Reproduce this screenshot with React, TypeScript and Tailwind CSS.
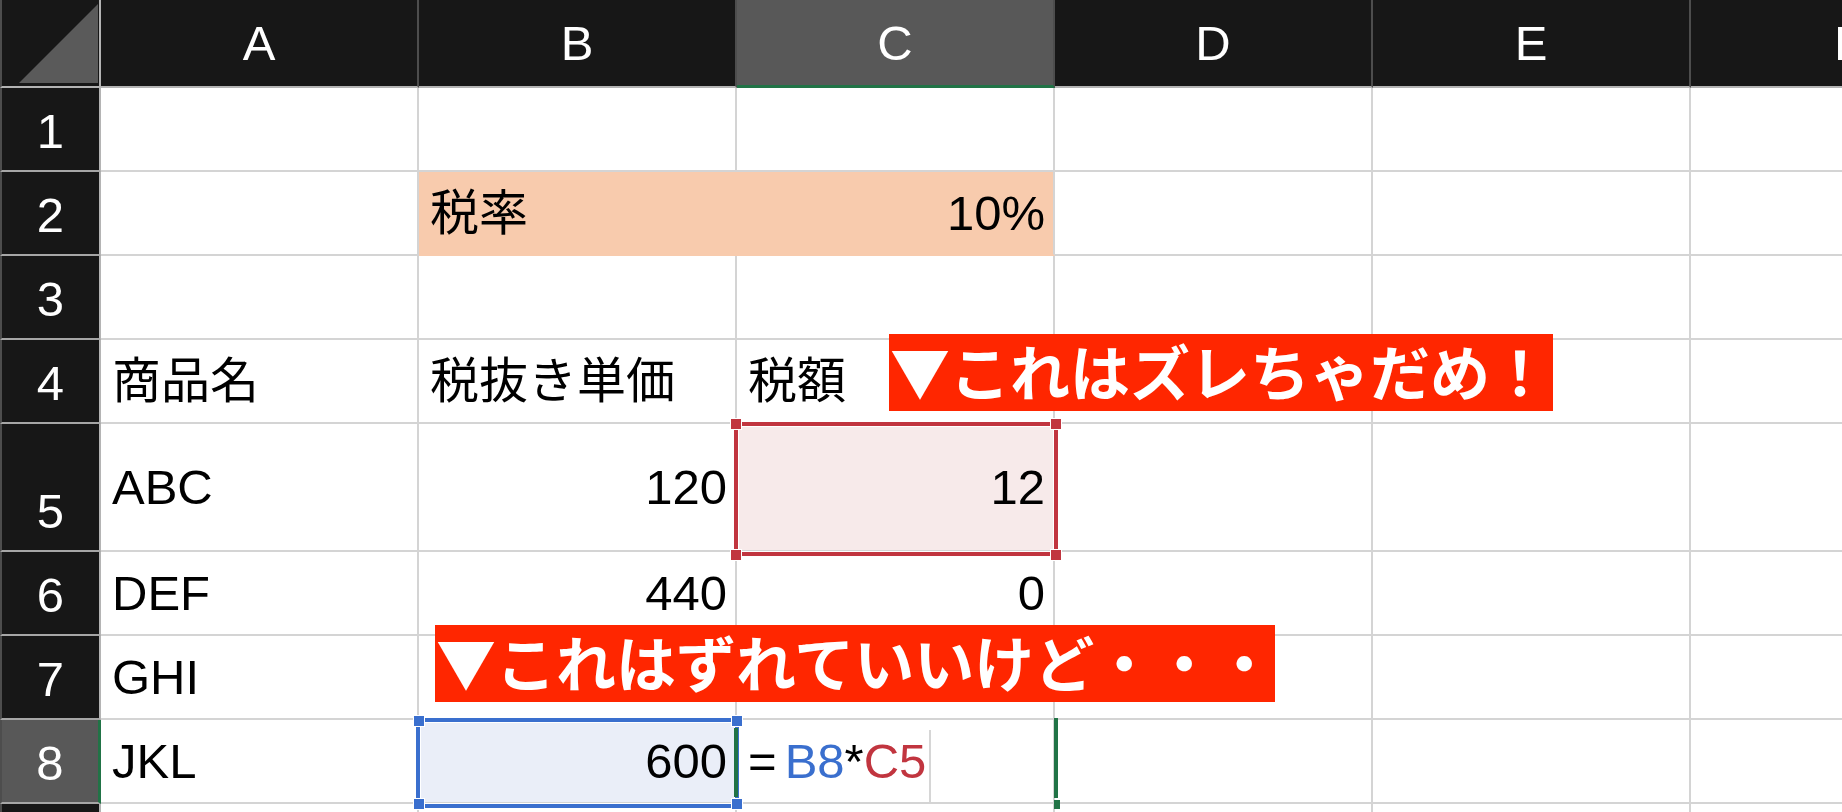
import React from 'react';

type Cell = {
  text?: React.ReactNode;
  align?: 'left' | 'right';
  fill?: string;
};

const COLS = ['A', 'B', 'C', 'D', 'E', 'F'];

// rows 1..8, columns A..F (row 9 is only a sliver at the bottom edge)
const ROWS: Cell[][] = [
  [{}, {}, {}, {}, {}, {}],
  [{}, { text: '税率', fill: 'orange-l' }, { text: '10%', align: 'right', fill: 'orange' }, {}, {}, {}],
  [{}, {}, {}, {}, {}, {}],
  [{ text: '商品名' }, { text: '税抜き単価' }, { text: '税額' }, {}, {}, {}],
  [{ text: 'ABC' }, { text: '120', align: 'right' }, { text: '12', align: 'right', fill: 'pink' }, {}, {}, {}],
  [{ text: 'DEF' }, { text: '440', align: 'right' }, { text: '0', align: 'right' }, {}, {}, {}],
  [{ text: 'GHI' }, {}, {}, {}, {}, {}],
  [
    { text: 'JKL' },
    { text: '600', align: 'right', fill: 'blue' },
    {
      text: (
        <>
          <span className="mr-[8px]">=</span>
          <span className="text-[#3a6fce]">B8</span>
          <span>*</span>
          <span className="text-[#c1353f]">C5</span>
        </>
      ),
    },
    {},
    {},
    {},
  ],
];

const fillClass = (fill?: string) => {
  if (fill === 'orange-l') return 'bg-[#f8cbad] border-r-[#f8cbad] border-b-[#f8cbad]';
  if (fill === 'orange') return 'bg-[#f8cbad] border-b-[#f8cbad]';
  if (fill === 'pink') return 'bg-[#f7eaea]';
  if (fill === 'blue') return 'bg-[#eaeef8]';
  return 'bg-white';
};

const Handle = ({ className, color }: { className: string; color: string }) => (
  <div className={`absolute w-[12px] h-[12px] border border-white ${color} ${className}`} />
);

export default function App() {
  return (
    <div className="relative w-[1842px] h-[812px] overflow-hidden bg-white font-['Liberation_Sans','Noto_Sans_CJK_JP',sans-serif] text-[49px] leading-none text-black">
      <div className="grid grid-cols-[101px_318px_318px_318px_318px_318px_318px] grid-rows-[88px_84px_84px_84px_84px_128px_84px_84px_84px_8px]">
        {/* corner */}
        <div className="relative bg-[#171717] border-l-2 border-l-[#4d4d4d] border-r-2 border-r-[#b4b4b4] border-b-2 border-b-[#b4b4b4]">
          <svg className="absolute left-0 top-0" width="99" height="86" viewBox="0 0 99 86">
            <polygon points="17,83 96,83 96,4" fill="#5a5a5a" />
          </svg>
        </div>
        {COLS.map((c) => (
          <div
            key={c}
            className={`flex justify-center items-start pt-[19px] text-white border-r-2 border-r-[#4d4d4d] border-b-2 ${
              c === 'C' ? 'bg-[#585858] border-b-[3px] border-b-[#217346]' : 'bg-[#171717] border-b-[#b4b4b4]'
            }`}
          >
            {c}
          </div>
        ))}

        {ROWS.map((row, r) => (
          <React.Fragment key={r}>
            <div
              className={`flex justify-center items-end pb-[14px] text-white border-l-2 border-l-[#4d4d4d] border-b-2 border-b-[#a6a6a6] ${
                r === 7
                  ? 'bg-[#585858] border-r-[3px] border-r-[#217346]'
                  : 'bg-[#171717] border-r-2 border-r-[#b4b4b4]'
              }`}
            >
              {r + 1}
            </div>
            {row.map((cell, i) => (
              <div
                key={i}
                className={`flex items-center whitespace-nowrap pl-[11px] pr-[8px] border-r-2 border-b-2 border-[#d4d4d4] ${
                  cell.align === 'right' ? 'justify-end' : 'justify-start'
                } ${fillClass(cell.fill)}`}
              >
                {cell.text}
              </div>
            ))}
          </React.Fragment>
        ))}

        {/* row 9 sliver */}
        <div className="bg-[#171717] border-l-2 border-l-[#4d4d4d] border-r-2 border-r-[#b4b4b4]" />
        {COLS.map((c) => (
          <div key={c} className="bg-white border-r-2 border-[#d4d4d4]" />
        ))}
      </div>

      {/* C5 selection */}
      <div className="absolute left-[734px] top-[422px] w-[324px] h-[134px] border-4 border-[#c1353f] shadow-[inset_0_0_0_1px_#fff]" />
      <Handle color="bg-[#c1353f]" className="left-[730px] top-[418px]" />
      <Handle color="bg-[#c1353f]" className="left-[1050px] top-[418px]" />
      <Handle color="bg-[#c1353f]" className="left-[730px] top-[549px]" />
      <Handle color="bg-[#c1353f]" className="left-[1050px] top-[549px]" />

      {/* B8 selection */}
      <div className="absolute left-[416px] top-[718px] w-[323px] h-[90px] border-4 border-[#3a6fce] shadow-[inset_0_0_0_1px_#fff]" />
      <Handle color="bg-[#3a6fce]" className="left-[413px] top-[715px]" />
      <Handle color="bg-[#3a6fce]" className="left-[731px] top-[715px]" />
      <Handle color="bg-[#3a6fce]" className="left-[413px] top-[798px]" />
      <Handle color="bg-[#3a6fce]" className="left-[731px] top-[798px]" />

      {/* C8 edit markers */}
      <div className="absolute left-[734px] top-[728px] w-[4px] h-[69px] bg-[#217346]" />
      <div className="absolute left-[1054px] top-[718px] w-[4px] h-[80px] bg-[#217346]" />
      <div className="absolute left-[1054px] top-[800px] w-[6px] h-[9px] bg-[#217346]" />
      <div className="absolute left-[929px] top-[730px] w-[2px] h-[72px] bg-[#d6d6d6]" />

      {/* callouts */}
      <div className="absolute left-[889px] top-[334px] w-[664px] h-[77px] bg-[#ff2600] flex items-center pl-[1px] pb-[6px] text-white text-[60px] font-bold font-['Noto_Sans_CJK_JP',sans-serif] whitespace-nowrap">
        ▼これはズレちゃだめ！
      </div>
      <div className="absolute left-[435px] top-[625px] w-[840px] h-[77px] bg-[#ff2600] flex items-center pl-[1px] pb-[6px] text-white text-[60px] font-bold font-['Noto_Sans_CJK_JP',sans-serif] whitespace-nowrap">
        ▼これはずれていいけど・・・
      </div>
    </div>
  );
}
